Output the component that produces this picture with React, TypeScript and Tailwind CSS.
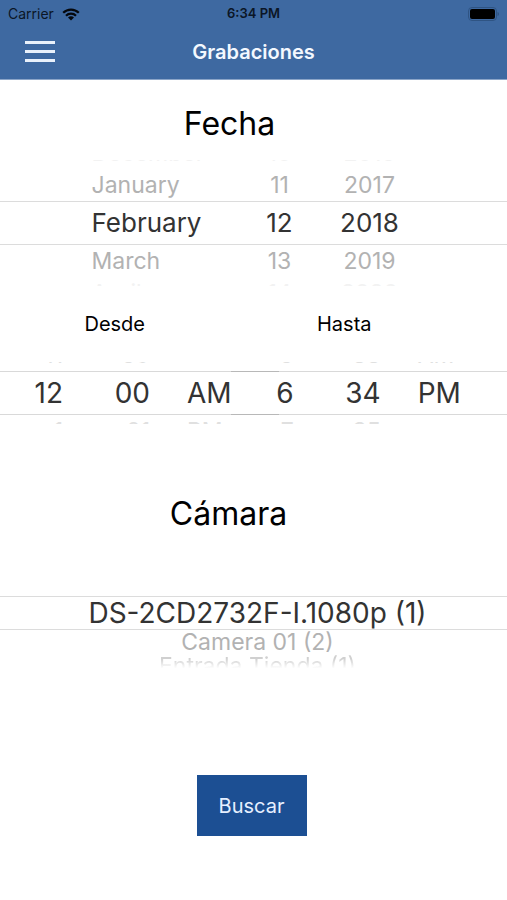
import clsx from "clsx"

type Row = { label: string; selected?: boolean; far?: boolean }

const months: Row[] = [
  { label: "December", far: true },
  { label: "January" },
  { label: "February", selected: true },
  { label: "March" },
  { label: "April", far: true },
]

const days: Row[] = [
  { label: "10", far: true },
  { label: "11" },
  { label: "12", selected: true },
  { label: "13" },
  { label: "14", far: true },
]

const years: Row[] = [
  { label: "2016", far: true },
  { label: "2017" },
  { label: "2018", selected: true },
  { label: "2019" },
  { label: "2020", far: true },
]

const timePickers = [
  {
    name: "Desde",
    hours: ["11", "12", "1"],
    minutes: ["59", "00", "01"],
    period: ["", "AM", "PM"],
  },
  {
    name: "Hasta",
    hours: ["5", "6", "7"],
    minutes: ["33", "34", "35"],
    period: ["AM", "PM", ""],
  },
]

function DateColumn({ label, rows, className }: { label: string; rows: Row[]; className: string }) {
  return (
    <ul role="listbox" aria-label={label} className={className}>
      {rows.map((row) => (
        <li
          key={row.label}
          role="option"
          aria-selected={!!row.selected}
          className={clsx(
            "whitespace-nowrap",
            row.selected && "h-11 text-[26px] leading-11 text-[#333333]",
            !row.selected && "h-8 text-[23px] leading-8",
            row.far && "text-[#f2f2f2]",
            !row.selected && !row.far && "text-[#b2b2b2]",
          )}
        >
          {row.label}
        </li>
      ))}
    </ul>
  )
}

function TimeColumn({ label, values, className }: { label: string; values: string[]; className: string }) {
  return (
    <ul role="listbox" aria-label={label} className={className}>
      {values.map((value, index) => (
        <li
          key={index}
          role="option"
          aria-selected={index === 1}
          className={
            index === 1
              ? "h-11 text-[28px] leading-11 text-[#333333]"
              : "h-8 text-[23px] leading-8 text-[#e0e0e0]"
          }
        >
          {value}
        </li>
      ))}
    </ul>
  )
}

function StatusBar() {
  return (
    <div className="grid h-7 grid-cols-3 items-center px-2 text-[13px] text-[#0b1626]">
      <div className="flex items-center gap-2">
        <span className="text-sm">Carrier</span>
        <svg width="18" height="13" viewBox="0 0 18 13" fill="none" stroke="#05080d" strokeWidth="2.2" aria-hidden="true">
          <path d="M1.2 4.8a11 11 0 0 1 15.6 0" />
          <path d="M4 7.7a7 7 0 0 1 10 0" />
          <path d="M9 12.6 6 9.6a4.2 4.2 0 0 1 6 0z" fill="#05080d" stroke="none" />
        </svg>
      </div>
      <span className="text-center font-semibold whitespace-nowrap">6:34 PM</span>
      <svg className="justify-self-end" width="31" height="14" viewBox="0 0 31 14" aria-hidden="true">
        <rect x="0.5" y="0.5" width="28" height="13" rx="3.5" fill="none" stroke="#2f5483" />
        <rect x="2" y="2" width="25" height="10" rx="2" fill="#000" />
        <path d="M29.500 5v4c1-.3 1.500-1 1.500-2s-.5-1.700-1.500-2z" fill="#2f5483" />
      </svg>
    </div>
  )
}

export default function App() {
  return (
    <div className="min-h-screen bg-white font-['Inter','Liberation_Sans',sans-serif] text-black">
      <header className="border-b border-[#8ba5c8] bg-[#3e69a1]">
        <StatusBar />
        <div className="grid h-[51px] grid-cols-3 items-center px-6 pb-1">
          <button type="button" aria-label="Menú" className="w-8">
            <svg width="32" height="24" viewBox="0 0 32 24" fill="#e9f1fb" aria-hidden="true">
              <rect x="1" y="1" width="30" height="3" />
              <rect x="1" y="10" width="30" height="3" />
              <rect x="1" y="19" width="30" height="3" />
            </svg>
          </button>
          <h1 className="text-center text-xl font-semibold text-[#f3f8ff]">Grabaciones</h1>
        </div>
      </header>

      <form>
        <h2 className="pt-6 pr-12 text-center text-[32px] leading-10">Fecha</h2>

        {/* Date wheel */}
        <div className="mt-4 grid h-[126px] content-center overflow-hidden">
          <div className="col-start-1 row-start-1 h-11 self-center border-y border-[#dcdcdc]" />
          <div className="col-start-1 row-start-1 flex justify-center gap-6">
            <DateColumn label="Mes" rows={months} className="w-36" />
            <DateColumn label="Día" rows={days} className="w-10 text-center" />
            <DateColumn label="Año" rows={years} className="w-[92px] text-center" />
          </div>
        </div>

        <div className="grid grid-cols-2 pt-6 pr-12 text-center text-xl leading-7">
          <span>Desde</span>
          <span>Hasta</span>
        </div>

        {/* Time wheels, the second one runs over the end of the first */}
        <div className="mt-6 flex">
          {timePickers.map((picker) => (
            <div
              key={picker.name}
              role="group"
              aria-label={picker.name}
              className="grid h-[62px] w-[55%] shrink-0 content-center overflow-hidden last:-ml-[9.5%]"
            >
              <div className="col-start-1 row-start-1 h-11 self-center border-y border-black/15" />
              <div className="col-start-1 row-start-1 flex">
                <TimeColumn label="Hora" values={picker.hours} className="w-[63px] text-right" />
                <TimeColumn label="Minuto" values={picker.minutes} className="w-[87px] text-right" />
                <TimeColumn label="Periodo" values={picker.period} className="ml-[37px] w-16" />
              </div>
            </div>
          ))}
        </div>

        <h2 className="pt-[70px] pr-[50px] text-center text-[32px] leading-10">Cámara</h2>

        {/* Camera wheel */}
        <ul
          role="listbox"
          aria-label="Cámara"
          className="mt-[62px] h-[72px] overflow-hidden text-center text-[23px] text-[#b2b2b2]"
        >
          <li
            role="option"
            aria-selected="true"
            className="h-[34px] border-y border-[#dcdcdc] pl-2 text-[28px] leading-8 text-[#333333]"
          >
            DS-2CD2732F-I.1080p (1)
          </li>
          <li role="option" aria-selected="false" className="h-6 pl-2 leading-6">
            Camera 01 (2)
          </li>
          <li
            role="option"
            aria-selected="false"
            className="h-6 bg-linear-to-b from-[#d0d0d0] from-20% to-white to-60% bg-clip-text pl-2 leading-6 text-transparent"
          >
            Entrada Tienda (1)
          </li>
        </ul>

        <div className="flex justify-center pt-[107px] pr-1 pb-16">
          <button type="button" className="h-[61px] w-[110px] bg-[#1c4f93] text-xl text-[#e6f0ff]">
            Buscar
          </button>
        </div>
      </form>
    </div>
  )
}
